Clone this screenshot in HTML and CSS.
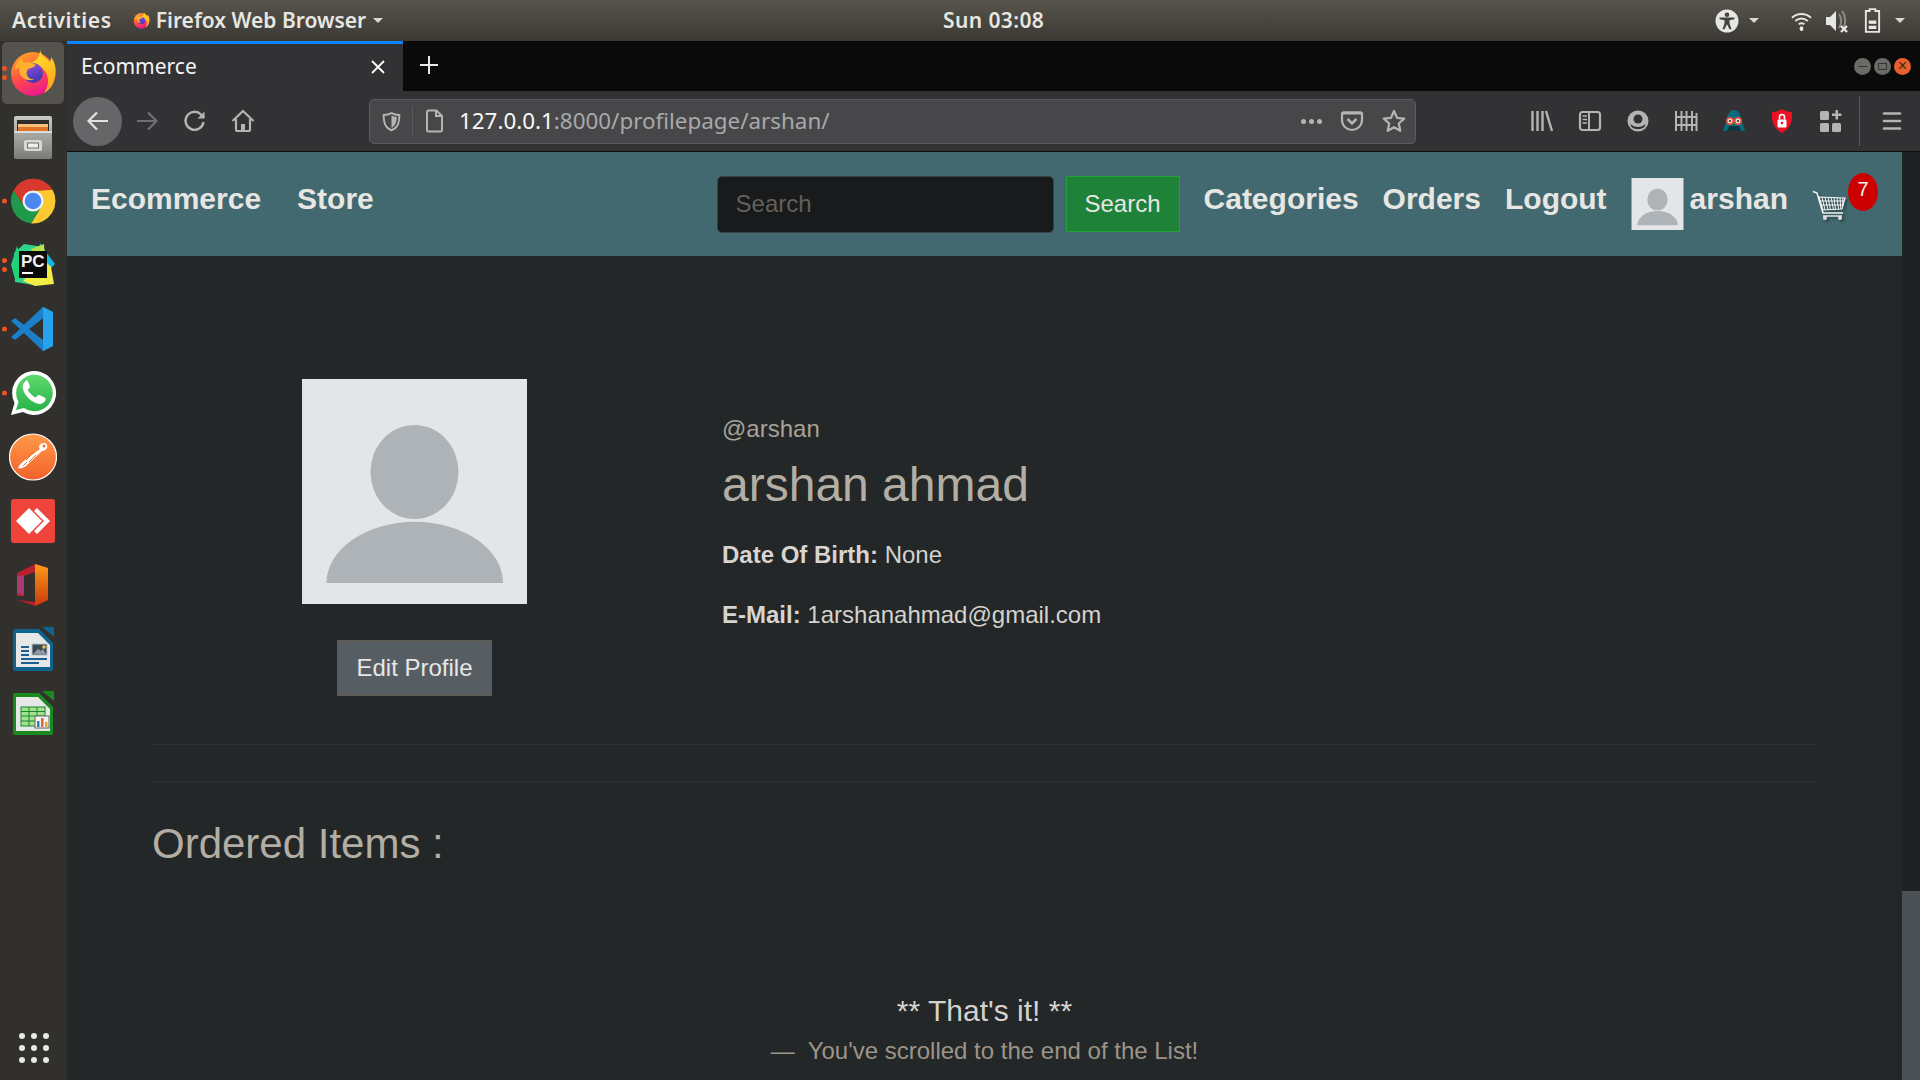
FILE: index.html
```html
<!DOCTYPE html>
<html lang="en">
<head>
<meta charset="utf-8">
<title>Ecommerce</title>
<link rel="stylesheet" href="styles.css">
</head>
<body>
<svg class="defs" width="0" height="0" aria-hidden="true">
  <defs>
    <linearGradient id="ffBase" x1="0.2" y1="0.1" x2="0.6" y2="1">
      <stop offset="0" stop-color="#ff9a26"/><stop offset="0.5" stop-color="#ff4a4a"/><stop offset="1" stop-color="#e8178f"/>
    </linearGradient>
    <linearGradient id="ffFlame" x1="0.3" y1="0" x2="0.7" y2="1">
      <stop offset="0" stop-color="#ffe226"/><stop offset="1" stop-color="#ffa01f"/>
    </linearGradient>
    <linearGradient id="ffGlobe" x1="0.2" y1="0" x2="0.6" y2="1">
      <stop offset="0" stop-color="#9a50e0"/><stop offset="1" stop-color="#3a34b0"/>
    </linearGradient>
    <linearGradient id="cabinet" x1="0" y1="0" x2="0" y2="1">
      <stop offset="0" stop-color="#c8c8c6"/><stop offset="1" stop-color="#7b7b79"/>
    </linearGradient>
    <linearGradient id="postman" x1="0" y1="0" x2="0" y2="1">
      <stop offset="0" stop-color="#ff9a4a"/><stop offset="1" stop-color="#f4602a"/>
    </linearGradient>
    <linearGradient id="wa" x1="0" y1="0" x2="0" y2="1">
      <stop offset="0" stop-color="#5fd96f"/><stop offset="1" stop-color="#27b347"/>
    </linearGradient>
    <linearGradient id="office" x1="0" y1="0" x2="0" y2="1">
      <stop offset="0" stop-color="#ff9a1a"/><stop offset="1" stop-color="#c83a08"/>
    </linearGradient>
    <symbol id="firefox" viewBox="0 0 48 48">
      <circle cx="24" cy="25" r="22" fill="url(#ffBase)"/>
      <path d="M31 1c1 6 7 8 10 12 1-2 1-4 1-5 5 6 6 16 3 24-2 6-6 10-10 12 4-6 5-12 3-18-3-8-10-11-16-12 5-2 9-6 9-13z" fill="url(#ffFlame)"/>
      <circle cx="24" cy="24" r="10" fill="url(#ffGlobe)"/>
      <path d="M6 18c2-5 5-7 7-9 0 2 1 4 2 5 3-2 7-1 10 1 3 1 1 3-3 4-4 1-5 4-4 7 1 3 4 5 8 4-6 3-13 0-15-5-1-3-1-5 0-7-2 1-4 2-5 4z" fill="#ffb02e"/>
    </symbol>
    <symbol id="avatar" viewBox="0 0 225 225">
      <rect width="225" height="225" fill="#e3e5e7"/>
      <ellipse cx="112.500" cy="93" rx="44" ry="47" fill="#aeb3b7"/>
      <path d="M24.500 204a88 61 0 0 1 176.500 0z" fill="#aeb3b7"/>
    </symbol>
  </defs>
</svg>

<div class="desktop">
  <header class="topbar">
    <div class="top-left">
      <span class="top-label activities">Activities</span>
      <svg class="top-ff"><use href="#firefox"/></svg>
      <span class="top-label">Firefox Web Browser</span>
      <span class="caret"></span>
    </div>
    <div class="top-label clock">Sun 03:08</div>
    <div class="top-right">
      <svg class="tray tray-a11y" viewBox="0 0 24 24">
        <circle cx="12" cy="12" r="11.500" fill="#e6e6e4"/>
        <circle cx="12" cy="5.800" r="2.300" fill="#45433e"/>
        <path d="M4.500 8.500h15v1.800l-5 1v3l2 6h-2l-2.500-5-2.500 5h-2l2-6v-3l-5-1z" fill="#45433e"/>
      </svg>
      <span class="caret caret-a11y"></span>
      <svg class="tray tray-wifi" viewBox="0 0 24 24" fill="none" stroke="#e6e6e4" stroke-width="2">
        <path d="M2 8.500c6-5 14-5 20 0"/><path d="M5.500 12c4-3.300 9-3.300 13 0"/><path d="M9 15.500c2-1.500 4-1.500 6 0"/>
        <ellipse cx="12" cy="20" rx="2" ry="2.500" fill="#e6e6e4" stroke="none"/>
      </svg>
      <svg class="tray tray-vol" viewBox="0 0 24 24">
        <path d="M1 8h4l6-6v20l-6-6H1z" fill="#e6e6e4"/>
        <path d="M14 5c3 4 3 10 0 14M17 2c4 5 4 14 1 17" fill="none" stroke="#8b8985" stroke-width="2"/>
        <path d="M16 17l6 6m0-6l-6 6" stroke="#e6e6e4" stroke-width="2.400"/>
      </svg>
      <svg class="tray tray-bat" viewBox="0 0 20 26">
        <path d="M7 1h6v2h4v22H3V3h4z" fill="none" stroke="#e6e6e4" stroke-width="2"/>
        <rect x="6" y="13" width="8" height="3.500" fill="#e6e6e4"/><rect x="6" y="18.500" width="8" height="3.500" fill="#e6e6e4"/>
      </svg>
      <span class="caret caret-end"></span>
    </div>
  </header>

  <div class="workspace">
    <aside class="dock">
      <div class="dock-item is-active"><span class="pips two"><i></i><i></i></span><svg class="dock-icon"><use href="#firefox"/></svg></div>
      <div class="dock-item">
        <svg class="dock-icon" viewBox="0 0 48 48">
          <path d="M5 5q0-2 2-2h34q2 0 2 2v39q0 2-2 2H7q-2 0-2-2z" fill="url(#cabinet)"/>
          <rect x="8" y="7" width="32" height="11" fill="#2c2c2c"/>
          <rect x="9" y="11" width="30" height="3" fill="#f6c27a"/><rect x="9" y="14" width="30" height="4" fill="#e0752a"/>
          <rect x="5" y="18" width="38" height="2" fill="#dcdcda"/>
          <rect x="15" y="27" width="18" height="11" rx="2" fill="#d8d8d6"/><rect x="18" y="29.500" width="12" height="6" fill="#6e6e6c"/><rect x="19" y="30.500" width="10" height="4" fill="#efefed"/>
        </svg>
      </div>
      <div class="dock-item"><span class="pips"><i></i></span>
        <svg class="dock-icon" viewBox="-24 -24 48 48">
          <path d="M-19.500-10.500A22.500 22.500 0 0 1 19.500-11.200L0-10-8.700 5z" fill="#d9392c"/>
          <path d="M19.500-11.200A22.500 22.500 0 0 1-2 22.400L8.700 5 0-10z" fill="#fdc931"/>
          <path d="M-2 22.400A22.500 22.500 0 0 1-19.500-10.500L-8.700 5 8.700 5z" fill="#1e9a4a"/>
          <circle r="10.500" fill="#f1f4f8"/><circle r="8.300" fill="#4a87ee"/>
        </svg>
      </div>
      <div class="dock-item"><span class="pips two"><i></i><i></i></span>
        <svg class="dock-icon" viewBox="0 0 48 48">
          <path d="M5 12 15 3l20 3-2 4 4 12-12 22-19-3z" fill="#2fd48a"/>
          <path d="M31 2l6 9 9 12-8 8-10-8z" fill="#14b8e6"/>
          <path d="M8 5 2 24l4 14 14-2z" fill="#21d07a"/>
          <path d="M22 8 35 3l1 14-8 6z" fill="#b8e04a"/>
          <path d="M14 40l20-22 8 8 3 17-19 2z" fill="#f2ec47"/>
          <rect x="10" y="10" width="28" height="27" fill="#0b0b0b"/>
          <text class="pc-text" x="12" y="26">PC</text>
          <rect x="13" y="31" width="11" height="2" fill="#fff"/>
        </svg>
      </div>
      <div class="dock-item"><span class="pips"><i></i></span>
        <svg class="dock-icon" viewBox="0 0 48 48">
          <path d="M34 2 44 7v34L34 46 15 28 6 35l-4-3 9-8-9-8 4-3 9 7z" fill="#1b7fc9"/>
          <path d="M34 2 44 7v34L34 46z" fill="#27a2ee"/>
          <path d="M34 13v22L20 24z" fill="#2f3230"/>
          <path d="M34 13 15 28 11 24 34 2z" fill="#1b7fc9"/>
        </svg>
      </div>
      <div class="dock-item"><span class="pips"><i></i></span>
        <svg class="dock-icon" viewBox="0 0 48 48">
          <path d="M2 46l3.500-12A22 22 0 1 1 14 43z" fill="#fff"/>
          <path d="M7 41l2.500-8A18.300 18.300 0 1 1 15 39z" fill="url(#wa)"/>
          <path d="M17 12c-2 1-4 4-3 8 1 6 9 14 16 15 3 0 6-2 6.500-4 .5-1 0-2-1-2.500l-5-2.500c-1-.3-2 0-2.500 1l-1.200 1.500c-3-1-7-5-8-8l1.500-1.500c.7-.7.8-1.500.4-2.500l-2-4.500c-.5-1-1.500-1-2-.5z" fill="#fff"/>
        </svg>
      </div>
      <div class="dock-item">
        <svg class="dock-icon" viewBox="0 0 48 48">
          <ellipse cx="24" cy="24" rx="23.500" ry="23" fill="url(#postman)" stroke="#fff" stroke-width="1.200"/>
          <path d="M9 35c2 1 5 0 8-2l16-15c2 0 4-1 5-3 1-3-1-5-3-5s-4 1-5 3c0 1 0 2 1 3L16 27c-3 2-6 5-7 8z" fill="#fff"/>
          <path d="M17 27l8-8M20 29l7-7M14 33l4-4" stroke="#f4702a" stroke-width="1"/>
          <circle cx="35" cy="13" r="1.500" fill="#f4702a"/>
        </svg>
      </div>
      <div class="dock-item">
        <svg class="dock-icon" viewBox="0 0 48 48">
          <rect x="2" y="2" width="44" height="44" rx="3" fill="#ef443b"/>
          <path d="M7 24 20 11l13 13-13 13z" fill="#fff"/>
          <path d="M28 11l13 13-13 13-3-3 10-10-10-10z" fill="#fff"/>
        </svg>
      </div>
      <div class="dock-item">
        <svg class="dock-icon" viewBox="0 0 48 48">
          <path d="M8 12 26 3l13 4v32l-13 6-18-6 18 2V11l-11 4v20H8z" fill="#b81f2a"/>
          <path d="M8 15v17l7 2V14z" fill="#a83c70"/>
          <path d="M26 3l13 4v32l-13 6z" fill="url(#office)"/>
        </svg>
      </div>
      <div class="dock-item">
        <svg class="dock-icon" viewBox="0 0 48 48">
          <path d="M4 6q0-2 2-2h24l14 14v26q0 2-2 2H6q-2 0-2-2z" fill="#10628f"/>
          <path d="M7 8h22l12 12v22H7z" fill="#e6e8e8"/>
          <path d="M33 2h12v10z" fill="#10628f"/>
          <path d="M12 21h8v2h-8zM12 25h8v2h-8zM12 29h8v2h-8zM12 33h26v2H12zM12 37h18v2H12z" fill="#1c5f92"/>
          <rect x="23" y="19" width="15" height="11" fill="#3a4a55" stroke="#bcc4c8"/>
          <path d="M24 29l5-5 3 2 2-2 3 5z" fill="#8f9aa2"/>
          <circle cx="35" cy="22" r="1.800" fill="#f0c040"/>
        </svg>
      </div>
      <div class="dock-item">
        <svg class="dock-icon" viewBox="0 0 48 48">
          <path d="M4 6q0-2 2-2h24l14 14v26q0 2-2 2H6q-2 0-2-2z" fill="#1a8a1e"/>
          <path d="M7 8h22l12 12v22H7z" fill="#e6e8e8"/>
          <path d="M33 2h12v10z" fill="#1a8a1e"/>
          <rect x="12" y="18" width="24" height="19" fill="#a6e08e" stroke="#128a2a"/>
          <path d="M12 22.500h24M12 27h24M12 32h24M20 18v19M28 18v19" stroke="#128a2a" fill="none"/>
          <rect x="26" y="27" width="14" height="12" fill="#f4f4f4" stroke="#666"/>
          <rect x="28" y="32" width="2.500" height="6" fill="#2e7fc0"/><rect x="32" y="29" width="2.500" height="9" fill="#e0662a"/><rect x="36" y="33" width="2.500" height="5" fill="#e0a62a"/>
        </svg>
      </div>
      <div class="dock-grid">
        <i></i><i></i><i></i><i></i><i></i><i></i><i></i><i></i><i></i>
      </div>
    </aside>

    <div class="browser">
      <div class="tabstrip">
        <div class="tab">
          <span class="tab-title">Ecommerce</span>
          <svg class="tab-close" viewBox="0 0 14 14"><path d="M1 1l12 12M13 1 1 13" stroke="#fff" stroke-width="1.800"/></svg>
        </div>
        <svg class="new-tab" viewBox="0 0 20 20"><path d="M10 1v18M1 10h18" stroke="#e8e8e8" stroke-width="2"/></svg>
        <div class="win-controls">
          <span class="win-btn"><i class="win-min"></i></span>
          <span class="win-btn"><i class="win-max"></i></span>
          <span class="win-btn win-close">×</span>
        </div>
      </div>

      <div class="toolbar">
        <span class="tool tool-back"><svg class="glyph" viewBox="0 0 24 24" fill="none" stroke="#e2e2e3" stroke-width="2.200"><path d="M22 12H3M11 3.500 2.500 12l8.500 8.500"/></svg></span>
        <span class="tool"><svg class="glyph" viewBox="0 0 24 24" fill="none" stroke="#6f6f71" stroke-width="2.200"><path d="M2 12h19M13 3.500l8.500 8.500-8.500 8.500"/></svg></span>
        <span class="tool"><svg class="glyph" viewBox="0 0 24 24" fill="none" stroke="#b4b4b5" stroke-width="2.400"><path d="M20.500 13a9 9 0 1 1-2.500-7.500l3 3"/><path d="M21.500 2.500v7h-7" fill="#b4b4b5" stroke="none"/></svg></span>
        <span class="tool"><svg class="glyph" viewBox="0 0 24 24" fill="none" stroke="#b4b4b5" stroke-width="2.200"><path d="M1.500 12 12 2l10.500 10M5 10v11q0 1 1 1h12q1 0 1-1V10"/><rect x="10" y="15" width="4" height="7" fill="#b4b4b5" stroke="none"/></svg></span>

        <div class="urlbar">
          <span class="url-shield"><svg class="glyph" viewBox="0 0 24 24"><path d="M12 2.500c3 1.500 6 2 9 2 0 8-1 14-9 17.500C4 18.500 3 12.500 3 4.500c3 0 6-.5 9-2z" fill="none" stroke="#b4b4b5" stroke-width="2.200"/><path d="M12 5c2 1 4 1.300 6 1.500 0 5-1 10-6 13z" fill="#b4b4b5"/></svg></span>
          <span class="url-page"><svg class="glyph" viewBox="0 0 24 24" fill="none" stroke="#b4b4b5" stroke-width="2"><path d="M5 3q0-1.500 1.500-1.500h8L20 7v14q0 1.500-1.500 1.500h-12Q5 22.500 5 21z"/><path d="M14 1.500V7h6"/></svg></span>
          <span class="url-text"><span class="url-host">127.0.0.1</span>:8000/profilepage/arshan/</span>
          <span class="url-dots"><i></i><i></i><i></i></span>
          <span class="url-btn"><svg class="glyph" viewBox="0 0 24 24" fill="none" stroke="#b4b4b5" stroke-width="2.200"><path d="M3 3.500h18q1 0 1 1V11c0 6-5 10-10 10S2 17 2 11V4.500q0-1 1-1z"/><path d="M3 4h18" stroke-width="3"/><path d="M7.500 10 12 14.500 16.500 10" stroke-width="2.600"/></svg></span>
          <span class="url-btn url-star"><svg class="glyph" viewBox="0 0 24 24" fill="none" stroke="#b4b4b5" stroke-width="2.200" stroke-linejoin="round"><path d="m12 2 3 6.800 7.200.8-5.400 4.900 1.500 7.300L12 18.200 5.700 21.800l1.500-7.300L1.800 9.600 9 8.800z"/></svg></span>
        </div>

        <div class="tool-group">
          <span class="tool"><svg class="glyph" viewBox="0 0 24 24" fill="none" stroke="#b4b4b5" stroke-width="2.400"><path d="M2.500 2v20M7.500 2v20M12.500 2v20M16 2l6 20"/></svg></span>
          <span class="tool"><svg class="glyph" viewBox="0 0 24 24" fill="none" stroke="#b4b4b5" stroke-width="2.200"><rect x="2" y="3" width="20" height="18" rx="2.500"/><path d="M11 3v18" stroke-width="2"/><path d="M4.500 7H9M4.500 10.500H9M4.500 14H9" stroke-width="1.600"/></svg></span>
          <span class="tool"><svg class="glyph" viewBox="0 0 24 24"><circle cx="12" cy="12" r="10.500" fill="#b4b4b5"/><circle cx="12" cy="10" r="4.500" fill="#323234"/><path d="M4.500 15c4 4 11 4 15 0 0 3-3 5-7.500 5s-7.500-2-7.500-5z" fill="#323234"/></svg></span>
          <span class="tool"><svg class="glyph" viewBox="0 0 24 24" fill="none" stroke="#b4b4b5" stroke-width="2"><path d="M2 2v20M7.500 2v20M12.500 2v20M18 2v20M22.500 4v18M1 8h22M1 16h22"/></svg></span>
          <span class="tool"><svg class="glyph" viewBox="0 0 24 24"><path d="M12 1c5 0 7 6 8 12l3 9H1l3-9c1-6 3-12 8-12z" fill="#0a6a7e"/><path d="M5 22l2-5h10l2 5z" fill="#0b3844"/><circle cx="8" cy="12" r="3.200" fill="#f2d8c8" stroke="#e8503a" stroke-width="1.500"/><circle cx="16" cy="12" r="3.200" fill="#f2d8c8" stroke="#e8503a" stroke-width="1.500"/><circle cx="8" cy="12" r="1" fill="#222"/><circle cx="16" cy="12" r="1" fill="#222"/></svg></span>
          <span class="tool"><svg class="glyph" viewBox="0 0 24 24"><path d="M12 0c3 2 6 3 10 3 .5 9-1 16-10 21C3 19 1.500 12 2 3c4 0 7-1 10-3z" fill="#ee0f22"/><rect x="7.500" y="10.500" width="9" height="8" rx="1" fill="#fff"/><path d="M9.500 10.500V8a2.500 2.500 0 0 1 5 0v2.500" fill="none" stroke="#fff" stroke-width="1.600"/><circle cx="12" cy="14" r="1.300" fill="#ee0f22"/></svg></span>
          <span class="tool"><svg class="glyph" viewBox="0 0 24 24" fill="#b4b4b5"><rect x="2" y="2" width="9" height="9" rx="1.500"/><rect x="2" y="14" width="9" height="9" rx="1.500"/><rect x="14" y="14" width="9" height="9" rx="1.500"/><path d="M17.500 1h2.500v3.500h3.500V7H20v3.500h-2.500V7H14V4.500h3.500z"/></svg></span>
        </div>
        <span class="tool-sep"></span>
        <span class="tool"><svg class="glyph" viewBox="0 0 24 24" stroke="#b4b4b5" stroke-width="2.600" stroke-linecap="round"><path d="M4 4.500h16M4 12h16M4 19.500h16"/></svg></span>
      </div>

      <div class="viewport">
        <main class="page">
          <nav class="navbar">
            <a class="nav-link brand">Ecommerce</a>
            <a class="nav-link">Store</a>
            <form class="search">
              <input class="search-input" type="text" placeholder="Search">
              <button class="search-btn" type="button">Search</button>
            </form>
            <a class="nav-link">Categories</a>
            <a class="nav-link">Orders</a>
            <a class="nav-link">Logout</a>
            <svg class="nav-avatar"><use href="#avatar"/></svg>
            <a class="nav-link nav-user">arshan</a>
            <div class="cart">
              <svg class="cart-icon" viewBox="0 0 34 34" fill="none" stroke="#f2f2f2">
                <path d="M1 3.500 5 5l6 20h20" stroke-width="1.600"/>
                <path d="M7 9l26 1-3 11-19 1z" stroke-width="1.200"/>
                <path d="M10 9l3 13M13 9l3 13M16 9l2.500 13M19 9.500l2.500 12M22 9.500l1.500 12M25 10l1.500 11M28 10l.8 11M31 10l-.5 9M8 13h24M9.500 17h21.500" stroke-width="1"/>
                <circle cx="13" cy="30" r="2" fill="#ddd" stroke="none"/><circle cx="28" cy="30" r="2" fill="#ddd" stroke="none"/>
                <path d="M11 28h19" stroke-width="1.400"/>
              </svg>
              <span class="cart-badge">7</span>
            </div>
          </nav>

          <section class="profile">
            <div class="profile-side">
              <svg class="profile-pic"><use href="#avatar"/></svg>
              <a class="btn-edit">Edit Profile</a>
            </div>
            <div class="profile-info">
              <div class="handle">@arshan</div>
              <h2 class="full-name">arshan ahmad</h2>
              <p class="info-row"><b>Date Of Birth:</b> None</p>
              <p class="info-row"><b>E-Mail:</b> 1arshanahmad@gmail.com</p>
            </div>
          </section>

          <div class="content">
            <hr class="rule">
            <hr class="rule rule-second">
            <h3 class="orders-title">Ordered Items :</h3>
            <blockquote class="end-note">
              <p class="end-title">** That's it! **</p>
              <footer class="end-sub">—&nbsp; You've scrolled to the end of the List!</footer>
            </blockquote>
          </div>
        </main>
        <div class="scrollbar"><div class="thumb"></div></div>
      </div>
    </div>
  </div>
</div>
</body>
</html>
```

FILE: styles.css
```css
* { box-sizing: border-box; }
html, body { margin: 0; height: 100%; overflow: hidden; }
body { background: #232728; font-family: "Liberation Sans", Arial, sans-serif; }
.defs { position: absolute; }

.desktop { display: flex; flex-direction: column; width: 1920px; height: 1080px; }

/* GNOME top bar */
.topbar {
  height: 41px; flex: none;
  display: grid; grid-template-columns: 943px auto 1fr; align-items: center;
  background: linear-gradient(#57544c, #3b3934);
}
.top-left { display: flex; align-items: center; padding-left: 12px; }
.top-label { font-family: "Noto Sans", sans-serif; font-weight: 600; font-size: 21px; color: #e6e6e2; white-space: nowrap; padding-bottom: 2px; }
.activities { margin-right: 21px; letter-spacing: 0.6px; }
.clock { letter-spacing: 0.4px; }
.top-ff { width: 17px; height: 17px; margin-right: 6px; }
.caret { display: inline-block; width: 0; height: 0; border-left: 5px solid transparent; border-right: 5px solid transparent; border-top: 5px solid #d8d8d4; margin-left: 7px; }
.top-right { display: flex; align-items: center; justify-content: flex-end; padding-right: 15px; }
.tray { display: block; flex: none; }
.tray-a11y { width: 24px; height: 24px; }
.caret-a11y { margin-left: 10px; }
.tray-wifi { width: 23px; height: 24px; margin-left: 31px; }
.tray-vol { width: 24px; height: 24px; margin-left: 12px; }
.tray-bat { width: 19px; height: 25px; margin-left: 14px; }
.caret-end { margin-left: 13px; }

.workspace { flex: 1; display: flex; min-height: 0; }

/* Dock */
.dock { width: 67px; flex: none; background: #32302c; display: flex; flex-direction: column; padding: 1px 0 0 2px; position: relative; }
.dock-item { position: relative; width: 62px; height: 62px; margin-bottom: 2px; display: flex; align-items: center; justify-content: center; border-radius: 5px; }
.dock-item.is-active { background: #55534e; }
.dock-icon { width: 48px; height: 48px; display: block; }
.pips { position: absolute; left: 0; top: 50%; transform: translateY(-50%); display: flex; flex-direction: column; gap: 4px; }
.pips i { display: block; width: 5px; height: 5px; border-radius: 50%; background: #e95420; }
.pc-text { font-family: "Liberation Sans", sans-serif; font-weight: 700; font-size: 17px; fill: #f2f2f2; }
.dock-grid { margin: auto 0 17px 17px; display: grid; grid-template-columns: repeat(3, 6px); grid-auto-rows: 6px; gap: 6px; padding: 0; }
.dock-grid i { background: #e8e8e6; border-radius: 50%; }

/* Browser chrome */
.browser { flex: 1; display: flex; flex-direction: column; min-width: 0; }
.tabstrip { height: 50px; flex: none; background: #0a0a0a; display: flex; align-items: stretch; }
.tab { width: 336px; background: #323234; border-top: 3px solid #0a84ff; display: flex; align-items: center; justify-content: space-between; padding: 0 18px 2px 14px; }
.tab-title { font-family: "Noto Sans", sans-serif; font-size: 21px; color: #f4f4f5; padding-bottom: 2px; }
.tab-close { width: 14px; height: 14px; }
.new-tab { width: 20px; height: 20px; align-self: center; margin: 0 0 2px 16px; }
.win-controls { margin-left: auto; display: flex; align-items: center; gap: 3px; padding-right: 9px; }
.win-btn { width: 17px; height: 17px; border-radius: 50%; background: #6a6a66; display: flex; align-items: center; justify-content: center; color: #3a2a20; font-size: 16px; line-height: 1; }
.win-min { width: 9px; height: 1px; background: #333; }
.win-max { width: 9px; height: 7px; border: 1px solid #333; }
.win-close { background: #e8602c; }

.toolbar { height: 61px; flex: none; background: #323234; border-bottom: 1px solid #0c0c0d; display: flex; align-items: center; padding-left: 6px; }
.tool { width: 48px; height: 48px; flex: none; display: flex; align-items: center; justify-content: center; border-radius: 50%; }
.tool-back { width: 49px; height: 49px; background: #666668; margin-right: 1px; }
.glyph { width: 24px; height: 24px; display: block; }
.urlbar { width: 1047px; height: 45px; flex: none; margin-left: 102px; background: #474749; border: 1px solid #5c5c5e; border-radius: 5px; display: flex; align-items: center; }
.url-shield { width: 43px; height: 100%; display: flex; align-items: center; justify-content: center; position: relative; }
.url-shield::after { content: ""; position: absolute; right: 0; top: 6px; bottom: 6px; width: 1px; background: #58585a; }
.url-shield .glyph { width: 21px; height: 21px; }
.url-page { width: 23px; margin-left: 9px; }
.url-text { margin-left: 14px; font-family: "Noto Sans", sans-serif; font-size: 22.4px; color: #a9a9ab; white-space: nowrap; padding-bottom: 2px; }
.url-host { color: #f9f9fa; }
.url-dots { margin-left: auto; display: flex; gap: 3px; }
.url-dots i { width: 5px; height: 5px; border-radius: 50%; background: #b4b4b5; display: block; }
.url-btn { width: 24px; margin-left: 18px; }
.url-btn .glyph { width: 24px; }
.url-star { margin-right: 9px; }
.tool-group { display: flex; margin-left: 102px; }
.tool-sep { width: 1px; height: 50px; background: #5a5a5c; margin: 0 8px 0 5px; flex: none; }

/* Page */
.viewport { flex: 1; display: flex; min-height: 0; overflow: hidden; }
.page { flex: 1; min-width: 0; background: #232728; }
.scrollbar { width: 18px; flex: none; background: #1e2223; display: flex; flex-direction: column; justify-content: flex-end; }
.thumb { height: 189px; background: #4a5053; }

.navbar { height: 104px; background: #41696f; display: flex; align-items: flex-start; padding: 24px 0 0 24px; }
.nav-link { font-size: 30px; font-weight: 700; line-height: 45px; color: #e8e6e3; white-space: nowrap; margin-right: 24px; }
.brand { margin-right: 36px; }
.search { display: flex; gap: 12px; margin-left: auto; margin-right: 24px; }
.search-input { width: 337px; height: 57px; background: #181a1b; border: 1px solid #3c4143; border-radius: 5px; padding: 0 18px 1px; font: 24px "Liberation Sans", sans-serif; color: #ddd; outline: none; }
.search-input::placeholder { color: #62605a; opacity: 1; }
.search-btn { width: 114px; height: 56px; background: #1f8239; border: 1px solid #25a038; color: #e8e6e3; font: 24px "Liberation Sans", sans-serif; padding: 0; }
.nav-avatar { width: 53px; height: 52px; margin: 2px 6px 0 0; flex: none; }
.nav-user { margin-right: 24px; }
.cart { position: relative; width: 90px; height: 50px; flex: none; }
.cart-icon { width: 34px; height: 34px; position: absolute; left: 0; top: 12px; filter: drop-shadow(2px 2px 1px rgba(0,0,0,.35)); }
.cart-badge { position: absolute; left: 36px; top: -3px; width: 30px; height: 38px; border-radius: 50%; background: #cc0000; color: #f0eeea; font-size: 20px; display: flex; align-items: center; justify-content: center; padding-bottom: 6px; }

.profile { display: flex; padding: 123px 0 0 85px; }
.profile-side { width: 525px; display: flex; flex-direction: column; align-items: center; }
.profile-pic { width: 225px; height: 225px; display: block; }
.btn-edit { margin-top: 36px; width: 155px; height: 56px; background: #565e64; border: 1px solid #5f5a50; color: #e8e6e3; font-size: 24px; display: flex; align-items: center; justify-content: center; }
.profile-info { margin-left: 45px; padding-top: 32px; color: #d5d2cd; font-size: 24px; line-height: 36px; }
.handle { color: #a8a297; }
.full-name { margin: 9px 0 23px; font-size: 48px; font-weight: 400; line-height: 57.6px; color: #b3aea4; }
.info-row { margin: 0 0 24px; }
.info-row b { color: #d8d4cf; font-weight: 700; }

.content { padding: 48px 85px 0; }
.rule { margin: 0; border: 0; border-top: 1.5px solid #2d3234; }
.rule-second { margin-top: 36px; }
.orders-title { margin: 36.5px 0 0; font-size: 42px; font-weight: 400; line-height: 50.4px; color: #b3aea4; }
.end-note { margin: 119px 0 0; text-align: center; }
.end-title { margin: 0; font-size: 30px; line-height: 45px; color: #d5d2cd; }
.end-sub { font-size: 24px; line-height: 36px; color: #9d9488; }
```
